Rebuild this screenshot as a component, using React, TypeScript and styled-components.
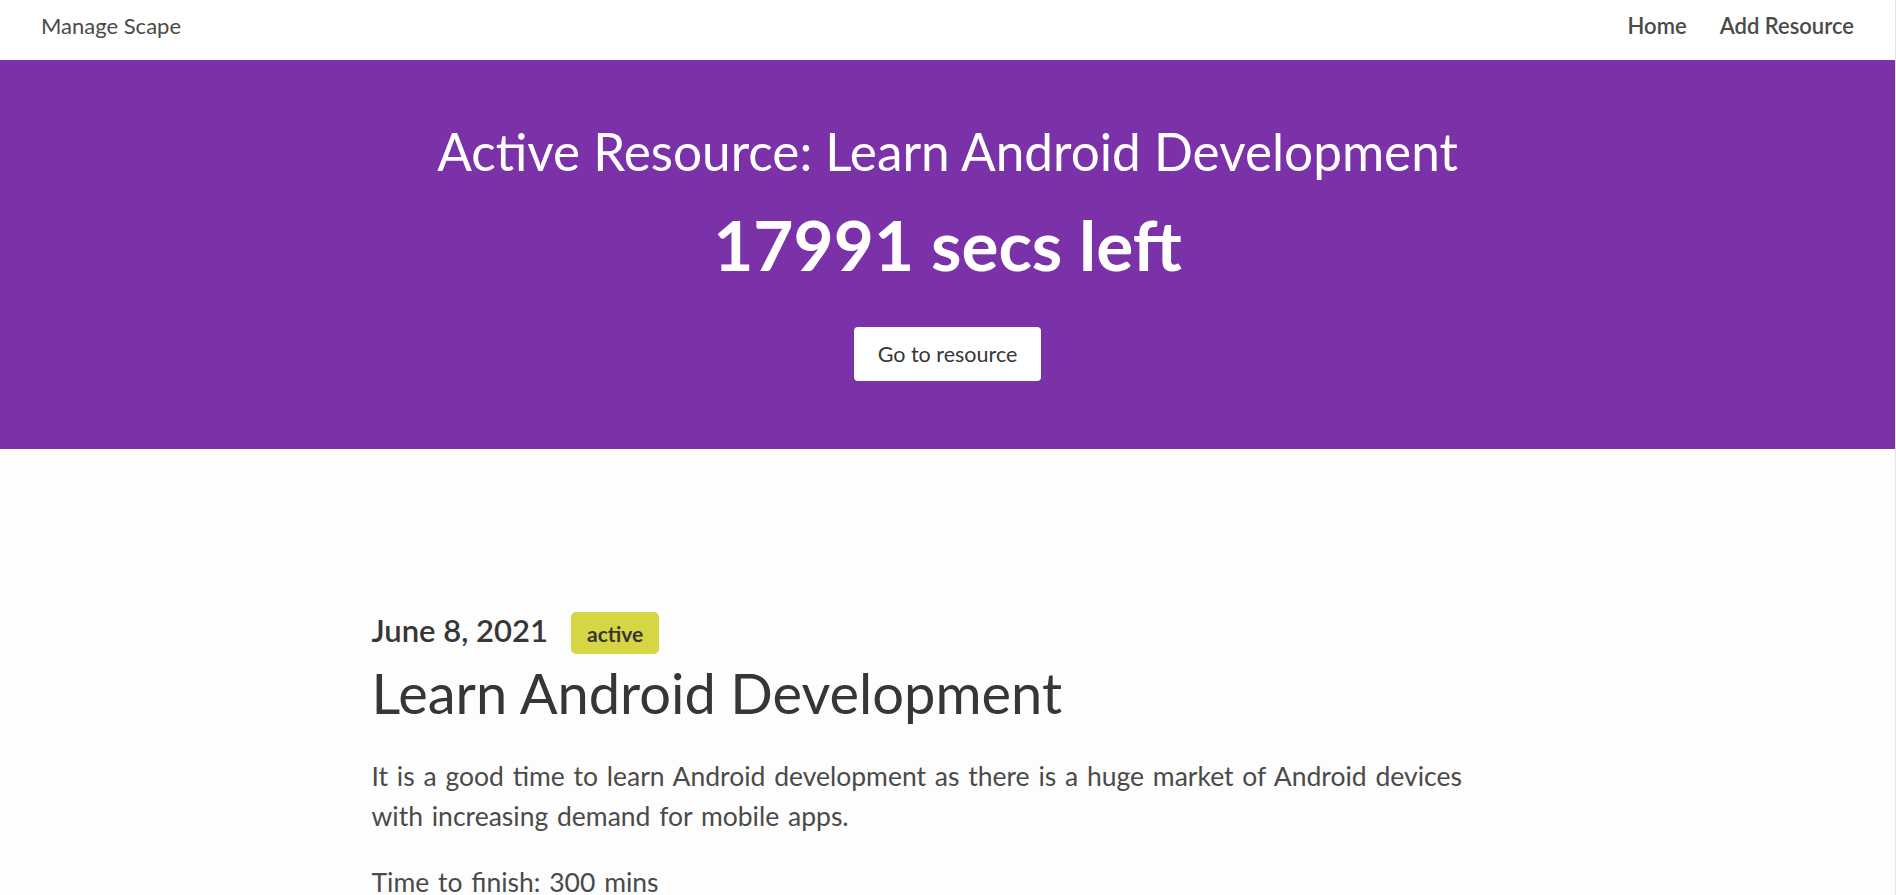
import React from "react";
import styled, { createGlobalStyle } from "styled-components";

const GlobalStyle = createGlobalStyle`
  html, body {
    margin: 0;
    padding: 0;
    background: #ffffff;
  }
  body {
    font-family: Lato, "Open Sans", "Liberation Sans", sans-serif;
    color: #4a4a4a;
  }
  * { box-sizing: border-box; }
`;

const Page = styled.div`
  min-height: 895px;
  border-right: 1px solid #e4e4e4;
  background: #fdfdfd;
`;

const Navbar = styled.nav`
  height: 60px;
  background: #ffffff;
  display: flex;
  justify-content: space-between;
  align-items: flex-start;
  padding: 13px 41px 0 41px;
`;

const Brand = styled.a`
  font-size: 22px;
  line-height: 1.2;
  color: #4a4a4a;
  text-decoration: none;
`;

const NavLinks = styled.div`
  display: flex;
  gap: 33px;
`;

const NavLink = styled.a`
  font-size: 22px;
  line-height: 1.2;
  font-weight: 600;
  color: #4a4a4a;
  text-decoration: none;
`;

const Hero = styled.section`
  background: #7b31a8;
  height: 389px;
  padding-top: 61px;
  display: flex;
  flex-direction: column;
  align-items: center;
  color: #ffffff;
`;

const HeroTitle = styled.h1`
  margin: 0;
  font-size: 51.3px;
  line-height: 1.2;
  font-weight: 400;
`;

const Countdown = styled.h2`
  margin: 20px 0 0 0;
  font-size: 69.3px;
  line-height: 1.2;
  font-weight: 700;
`;

const HeroButton = styled.a`
  margin-top: 41px;
  height: 54px;
  padding: 0 24px;
  display: inline-flex;
  align-items: center;
  background: #ffffff;
  color: #363636;
  border-radius: 4px;
  font-size: 21.5px;
  text-decoration: none;
`;

const Main = styled.main`
  padding-top: 163px;
`;

const Container = styled.div`
  width: 1152px;
  margin: 0 auto;
`;

const MetaRow = styled.div`
  display: flex;
  align-items: center;
  gap: 23px;
  height: 42px;
`;

const DateText = styled.span`
  margin-bottom: 4px;
  font-size: 31px;
  line-height: 1.2;
  font-weight: 600;
  color: #363636;
`;

const Tag = styled.span`
  height: 42px;
  padding: 0 16px;
  display: inline-flex;
  align-items: center;
  background: #d6d645;
  color: #363636;
  border-radius: 5px;
  font-size: 21px;
  font-weight: 700;
`;

const Title = styled.h3`
  margin: 5px 0 0 0;
  font-size: 56px;
  line-height: 1.2;
  font-weight: 400;
  color: #363636;
`;

const Paragraph = styled.p<{ $gap?: number }>`
  margin: ${(p) => p.$gap ?? 0}px 0 0 0;
  max-width: 1120px;
  font-size: 26.5px;
  word-spacing: 2px;
  line-height: 40px;
  color: #4a4a4a;
`;

export default function App() {
  return (
    <Page>
      <GlobalStyle />
      <Navbar>
        <Brand href="#">Manage Scape</Brand>
        <NavLinks>
          <NavLink href="#">Home</NavLink>
          <NavLink href="#">Add Resource</NavLink>
        </NavLinks>
      </Navbar>
      <Hero>
        <HeroTitle>Active Resource: Learn Android Development</HeroTitle>
        <Countdown>17991 secs left</Countdown>
        <HeroButton href="#">Go to resource</HeroButton>
      </Hero>
      <Main>
        <Container>
          <MetaRow>
            <DateText>June 8, 2021</DateText>
            <Tag>active</Tag>
          </MetaRow>
          <Title>Learn Android Development</Title>
          <Paragraph $gap={30}>
            It is a good time to learn Android development as there is a huge market of Android devices with increasing demand for mobile apps.
          </Paragraph>
          <Paragraph $gap={26}>Time to finish: 300 mins</Paragraph>
        </Container>
      </Main>
    </Page>
  );
}
